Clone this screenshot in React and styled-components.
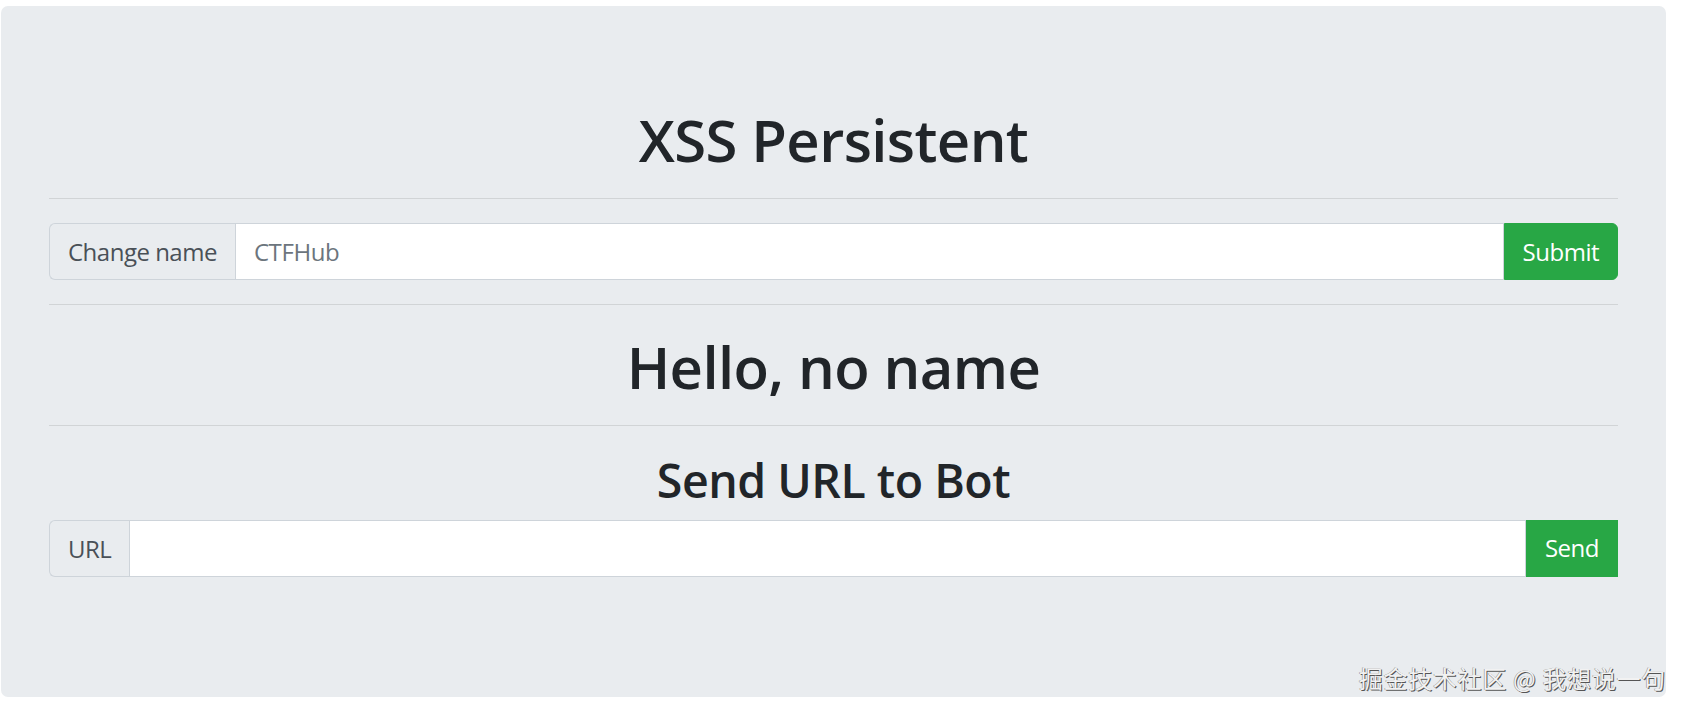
import React from "react";
import styled, { createGlobalStyle } from "styled-components";

const GlobalStyle = createGlobalStyle`
  html, body {
    margin: 0;
    padding: 0;
    background: #ffffff;
  }
  body {
    font-family: "Open Sans", "Noto Sans", sans-serif;
    color: #212529;
  }
  * { box-sizing: border-box; }
`;

const Page = styled.div`
  padding: 6px 0 16px 1px;
`;

const Jumbotron = styled.main`
  position: relative;
  display: flow-root;
  width: 1665px;
  background: #e9ecef;
  border-radius: 7px;
  padding: 96px 48px;
`;

const Title = styled.h1`
  margin: 0 0 12px;
  padding-top: 3px;
  font-size: 58px;
  font-weight: 600;
  letter-spacing: -0.6px;
  line-height: 69px;
  text-align: center;
  color: #212529;
`;

const Subtitle = styled.h2`
  margin: 0 0 12px;
  padding-top: 3px;
  font-size: 46.5px;
  font-weight: 600;
  letter-spacing: -0.5px;
  line-height: 54.6px;
  text-align: center;
  color: #212529;
`;

const Rule = styled.hr`
  margin: 24px 0;
  border: 0;
  border-top: 1px solid rgba(0, 0, 0, 0.1);
  height: 0;
`;

const InputGroup = styled.form`
  display: flex;
  align-items: stretch;
  height: 57px;
  margin: ${(p) => (p.$last ? "0 0 24px" : "0")};
`;

const Addon = styled.span`
  flex: none;
  display: flex;
  align-items: center;
  padding: 0 18px;
  background: #e9ecef;
  border: 1px solid #ced4da;
  border-right: 0;
  border-radius: 6px 0 0 6px;
  font-size: 24px;
  letter-spacing: -0.5px;
  color: #495057;
  white-space: nowrap;
`;

const Field = styled.input`
  flex: 1;
  min-width: 0;
  padding: 0 18px;
  background: #ffffff;
  border: 1px solid #ced4da;
  border-radius: 0;
  font-family: inherit;
  font-size: 24px;
  letter-spacing: -0.4px;
  color: #495057;
  outline: none;
  &::placeholder {
    color: #6c757d;
    opacity: 1;
  }
`;

const Action = styled.button`
  flex: none;
  padding: 0 18px;
  background: #28a745;
  border: 1px solid #28a745;
  border-radius: ${(p) => (p.$rounded ? "0 6px 6px 0" : "0")};
  color: #ffffff;
  font-family: inherit;
  font-size: 24px;
  letter-spacing: -0.5px;
  line-height: 36px;
  cursor: pointer;
`;

const Watermark = styled.div`
  position: absolute;
  right: 0;
  bottom: 4px;
  font-family: "Noto Sans CJK SC", "Noto Sans", sans-serif;
  font-size: 24px;
  letter-spacing: 0.7px;
  line-height: 30px;
  color: #f2f2f2;
  text-shadow: 1px 1px 0 #555, -0.5px -0.5px 0 #888;
  white-space: nowrap;
  pointer-events: none;
`;

export default function App() {
  return (
    <>
      <GlobalStyle />
      <Page>
        <Jumbotron>
          <Title>XSS Persistent</Title>
          <Rule />
          <InputGroup onSubmit={(e) => e.preventDefault()}>
            <Addon>Change name</Addon>
            <Field type="text" placeholder="CTFHub" />
            <Action type="submit" $rounded>
              Submit
            </Action>
          </InputGroup>
          <Rule />
          <Title>Hello, no name</Title>
          <Rule />
          <Subtitle>Send URL to Bot</Subtitle>
          <InputGroup $last onSubmit={(e) => e.preventDefault()}>
            <Addon>URL</Addon>
            <Field type="text" />
            <Action type="submit">Send</Action>
          </InputGroup>
          <Watermark>掘金技术社区 @ 我想说一句</Watermark>
        </Jumbotron>
      </Page>
    </>
  );
}
